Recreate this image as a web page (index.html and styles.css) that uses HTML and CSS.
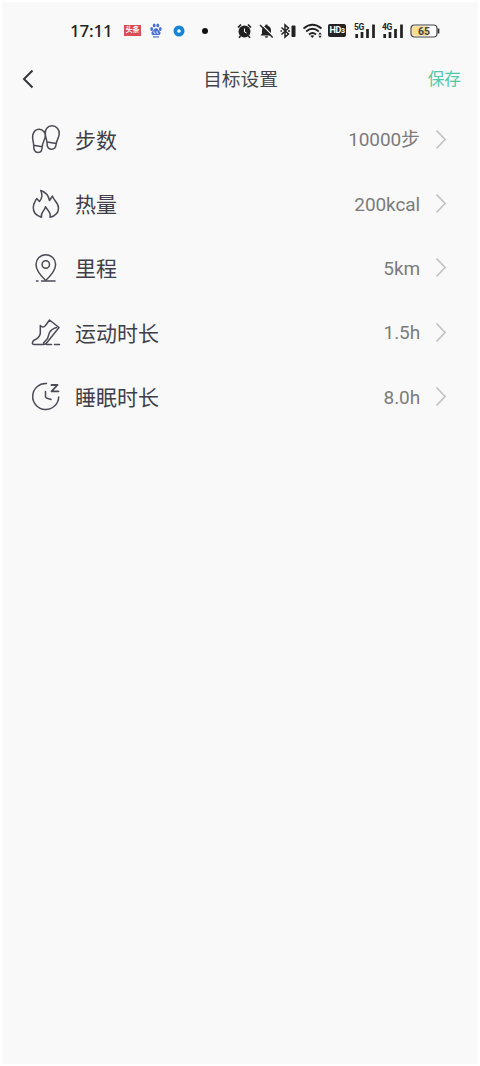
FILE: index.html
```html
<!DOCTYPE html>
<html lang="zh-CN">
<head>
<meta charset="utf-8">
<title>目标设置</title>
<link rel="stylesheet" href="styles.css">
</head>
<body>
<main class="screen">
  <div class="status">
    <div class="status-left">
      <span class="clock">17:11</span>
      <span class="news">头条</span>
      <svg class="paw" width="12" height="15" viewBox="0 0 12 15" fill="#4b70d4"><ellipse cx="1.7" cy="6" rx="1.4" ry="1.9"/><ellipse cx="4.2" cy="2.4" rx="1.4" ry="1.9"/><ellipse cx="7.8" cy="2.4" rx="1.4" ry="1.9"/><ellipse cx="10.3" cy="6" rx="1.4" ry="1.9"/><path d="M6 5.2C8 5.2 8.4 7.4 9.8 8.5C11.3 10 10.4 12 8.7 12H3.3C1.6 12 .7 10 2.2 8.5C3.6 7.4 4 5.2 6 5.2Z"/><path d="M4 8.2v2h1.500M7 8v2.200h1.500" fill="none" stroke="#fff" stroke-width=".8"/><path d="M3 13.300h6v1.200H3z"/></svg>
      <svg class="ring" width="12" height="12" viewBox="0 0 12 12"><circle cx="6" cy="6" r="5.500" fill="#1686d4"/><circle cx="6" cy="6" r="1.800" fill="#fff"/></svg>
      <span class="dot"></span>
    </div>
    <div class="status-right">
      <svg width="15" height="16" viewBox="0 0 15 16"><circle cx="7.500" cy="8.500" r="6" fill="#222"/><path d="M1 4.500L4 1.500M14 4.500L11 1.500M3.500 13l-1.500 1.700M11.500 13l1.500 1.700" stroke="#222" stroke-width="1.700"/><path d="M7.500 5.500v3.500l2 1" fill="none" stroke="#fff" stroke-width="1"/></svg>
      <svg class="bell" width="15" height="16" viewBox="0 0 15 16"><path d="M7.500 1.500c.8 0 1.200.5 1.200 1.200C11 3.300 12 5 12 7.500v3l1.500 2h-12l1.500-2v-3c0-2.500 1-4.200 3.300-4.800 0-.7.400-1.200 1.200-1.200zM6 13.200h3c0 2-3 2-3 0z" fill="#222"/><path d="M2.200 1.300L14.500 13.500" stroke="#f9f9f9" stroke-width="1.200"/><path d="M1 2l12.700 12.500" stroke="#222" stroke-width="1.400"/></svg>
      <svg class="bluetooth" width="17" height="16" viewBox="0 0 17 16"><path d="M1.500 4.500l7 6.500-3.500 3V2l3.500 3-7 6.500M.5 8h1.500M8 8h2" fill="none" stroke="#222" stroke-width="1.500"/><rect x="11.500" y="2.500" width="4" height="11.500" rx="1" fill="#222"/></svg>
      <svg class="wifi" width="20" height="16" viewBox="0 0 20 16"><path d="M.5 5.500Q9.500-2 18.500 5.500M3.200 8.500Q9.500 3.200 15.800 8.500M6 11.500Q9.500 8.500 13 11.500" fill="none" stroke="#222" stroke-width="1.900"/><path d="M7.300 12.800Q9.300 11.500 11.300 12.800L9.300 15z" fill="#222"/><path d="M17 9.300l1.700 2.200h-3.400zM17 15l-1.700-2.200h3.400z" fill="#222"/></svg>
      <span class="hd">HD<small>3</small></span>
      <svg class="signal" width="22" height="16" viewBox="0 0 22 16"><text x="0" y="6.500">5G</text><path d="M2.700 11v4M8 9v6M13.500 6v9M19.500 1.500v13.500" stroke="#222" stroke-width="2.700"/></svg>
      <svg class="signal second" width="22" height="16" viewBox="0 0 22 16"><text x="0" y="6.500">4G</text><path d="M2.700 11v4M8 9v6M13.500 6v9M19.500 1.500v13.500" stroke="#222" stroke-width="2.700"/></svg>
      <svg class="battery" width="30" height="14" viewBox="0 0 30 14"><rect x="1" y="1" width="26" height="12" rx="3.500" fill="#fff" stroke="#454545" stroke-width="1.200"/><path d="M4 2.200H18V11.800H4Q2.200 11.800 2.200 10V4Q2.200 2.200 4 2.200Z" fill="#f8dc92"/><path d="M28.500 4.500v5" stroke="#333" stroke-width="1.700"/><text x="14" y="10.700" text-anchor="middle">65</text></svg>
    </div>
  </div>
  <header class="header">
    <svg class="back" width="12" height="20" viewBox="0 0 12 20"><path d="M10.500 .5L2 9l8.500 8.500"/></svg>
    <h1>目标设置</h1>
    <span class="save">保存</span>
  </header>
  <ul class="goals">
    <li>
      <svg class="icon" width="30" height="30" viewBox="0 0 30 30"><path d="M2.700 20.500C2.500 16 1 14 1.800 10C2.800 6 5.500 4.200 8.500 4.300C12 4.500 14.500 7.500 14.300 11C14 15 11.500 17.500 11.200 21.500C11.200 25 9.800 27.500 7 27.500C4 27.500 2.500 25 2.700 20.500ZM2.700 20.200L11 21.800M14.300 9C13.800 4.500 16.500 .8 21 .8C25.500 .8 28.500 4.500 28.200 9C28 13 25.500 15 25.200 19C24.800 22.500 23 24.500 20.200 24.300C17 24 16 21.500 16 18C16 15 14.500 12.500 14.300 9ZM16 17L25.300 18.500"/></svg>
      <span class="label">步数</span><span class="value steps">10000步</span><svg class="chevron" width="12" height="20" viewBox="0 0 12 20"><path d="M1.500 .5L10 9.500L1.500 18.500"/></svg>
    </li>
    <li>
      <svg class="icon" width="30" height="30" viewBox="0 0 30 30"><path d="M10.500 28.200C4.500 26.500 2 22.500 2.300 18C2.600 14 4.500 12 5.700 9.500L8.500 12.500C11 9.500 11.500 5 9.700 1.500C14.500 3 17.500 6.500 18.500 11.500L21.500 7C22 11 27.500 13.500 27.500 19C27.500 24 24.500 27 19 28.200C20.500 24 17 22 14.500 17.700C14 22 9 23.500 10.500 28.200Z"/></svg>
      <span class="label">热量</span><span class="value">200kcal</span><svg class="chevron" width="12" height="20" viewBox="0 0 12 20"><path d="M1.500 .5L10 9.500L1.500 18.500"/></svg>
    </li>
    <li>
      <svg class="icon" width="30" height="30" viewBox="0 0 30 30"><path d="M14.700 27.500C10 23 5 17 5 11.500A9.800 9.800 0 0 1 24.600 11.500C24.600 17 19.500 23 14.700 27.500Z"/><circle cx="14.800" cy="11.500" r="3.700"/><path d="M10.500 28H24M5.500 28H7"/></svg>
      <span class="label">里程</span><span class="value">5km</span><svg class="chevron" width="12" height="20" viewBox="0 0 12 20"><path d="M1.500 .5L10 9.500L1.500 18.500"/></svg>
    </li>
    <li>
      <svg class="icon" width="30" height="30" viewBox="0 0 30 30"><path d="M9.300 7.500V15.500Q8.500 20 2.500 22.500Q0 26.500 3 26.500H12.500Q14.500 26.500 16 24.500L28 9.500L18.500 2L14.500 7.500Q12 10.500 9.300 7.500ZM15.500 26.500H20.500M23.500 26.500H28.500M25.500 9.500Q20.500 11 18.500 14.500L16.500 20.500L12.500 25"/></svg>
      <span class="label">运动时长</span><span class="value">1.5h</span><svg class="chevron" width="12" height="20" viewBox="0 0 12 20"><path d="M1.500 .5L10 9.500L1.500 18.500"/></svg>
    </li>
    <li>
      <svg class="icon" width="30" height="30" viewBox="0 0 30 30"><path d="M15.500 1.500A13 13 0 1 0 27.700 15M14.500 9.500V14.500Q14.500 15.500 15.500 16L20 17.500"/><path d="M20.500 3H26.500L20.500 9.300H27.500" stroke-width="1.800"/></svg>
      <span class="label">睡眠时长</span><span class="value">8.0h</span><svg class="chevron" width="12" height="20" viewBox="0 0 12 20"><path d="M1.500 .5L10 9.500L1.500 18.500"/></svg>
    </li>
  </ul>
</main>
</body>
</html>
```
FILE: styles.css
```css
* { box-sizing: border-box; }
body {
  margin: 0;
  padding: 2px;
  background: #fff;
  font-family: Roboto, "Noto Sans CJK SC", sans-serif;
}
.screen { min-height: 1062px; background: #f9f9f9; }
.status {
  height: 57px;
  padding: 0 38px 0 68px;
  display: flex;
  align-items: center;
  justify-content: space-between;
}
.status-left, .status-right { display: flex; align-items: center; }
.clock { width: 42px; font: 500 17px/20px "Noto Sans", sans-serif; letter-spacing: -.2px; color: #222; white-space: nowrap; }
.news {
  width: 17px;
  height: 11px;
  margin-left: 12px;
  background: #d94d55;
  color: #fff;
  font-size: 7px;
  font-weight: 700;
  line-height: 11px;
  text-align: center;
}
.paw { margin-left: 9px; }
.ring { margin-left: 11px; }
.dot { width: 6px; height: 6px; margin-left: 17px; border-radius: 50%; background: #111; }
.bell { margin-left: 7px; }
.bluetooth { margin-left: 6px; }
.wifi { margin-left: 6px; }
.hd {
  width: 18px;
  height: 13px;
  margin-left: 5px;
  border-radius: 2px;
  background: #222;
  color: #fff;
  font-size: 9px;
  font-weight: 700;
  line-height: 13px;
  text-align: center;
  letter-spacing: -.4px;
  white-space: nowrap;
}
.hd small { font-size: 7px; }
.signal { margin-left: 8px; }
.second { margin-left: 6px; }
.signal text { font: 700 8.5px Roboto, sans-serif; letter-spacing: -.3px; fill: #222; }
.battery { margin-left: 6px; }
.battery text { font: 700 10.5px Roboto, sans-serif; fill: #444; }
.header {
  height: 40px;
  margin-bottom: 8px;
  padding: 1px 17px 0 20px;
  display: grid;
  grid-template-columns: 1fr auto 1fr;
  align-items: center;
}
.back { fill: none; stroke: #34343c; stroke-width: 2; }
h1 { margin: 0 2px 0 0; font-size: 18.7px; line-height: 28px; font-weight: 400; color: #44444b; }
.save { justify-self: end; margin-bottom: 3px; font-size: 16.7px; color: #54c9a5; }
.goals { margin: 0; padding: 0; list-style: none; }
.goals li {
  height: 64.4px;
  padding: 1px 31px 0 29px;
  display: flex;
  align-items: center;
}
.icon { fill: none; stroke: #4b4b54; stroke-width: 1.5; stroke-linejoin: round; stroke-linecap: round; }
.label { flex: 1; margin-left: 14px; padding-top: 2px; font-size: 21px; line-height: 30px; color: #3f3f49; }
.value { padding-top: 1px; font-size: 19px; line-height: 28px; letter-spacing: -.1px; color: #7c7c7c; }
.steps { font-size: 19px; }
.chevron { margin-left: 15px; fill: none; stroke: #c4c4c4; stroke-width: 1.8; }
```
